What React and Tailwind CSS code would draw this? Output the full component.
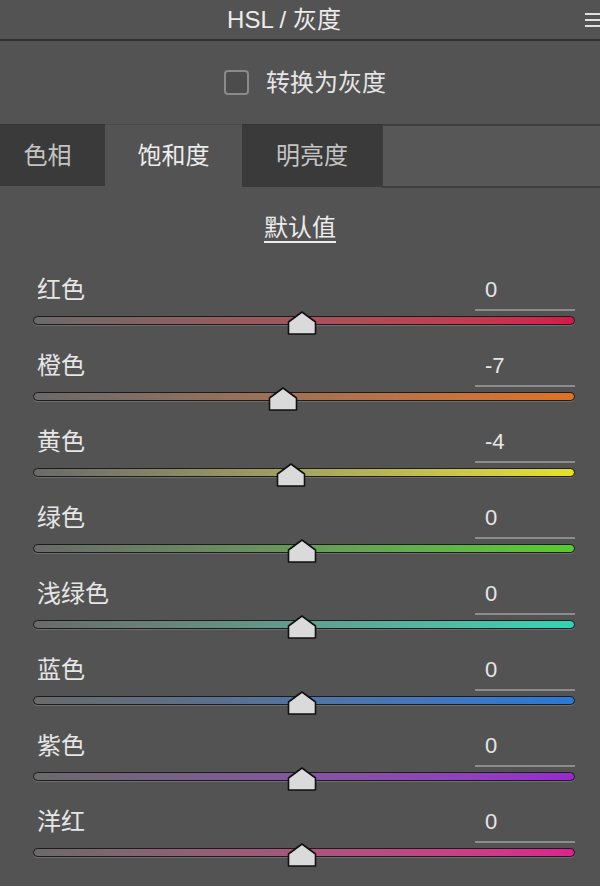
import React from "react"

const FONT = "'Liberation Sans', 'Noto Sans CJK SC', sans-serif"

const rows = [
  { label: "红色", value: 0, track: "bg-linear-to-r from-[#6a6a6a] to-[#d6174a]" },
  { label: "橙色", value: -7, track: "bg-linear-to-r from-[#6a6a6a] to-[#e07220]" },
  { label: "黄色", value: -4, track: "bg-linear-to-r from-[#6a6a6a] to-[#e6e21e]" },
  { label: "绿色", value: 0, track: "bg-linear-to-r from-[#6a6a6a] to-[#56cc2a]" },
  { label: "浅绿色", value: 0, track: "bg-linear-to-r from-[#6a6a6a] to-[#2cd6b4]" },
  { label: "蓝色", value: 0, track: "bg-linear-to-r from-[#6a6a6a] to-[#2a78da]" },
  { label: "紫色", value: 0, track: "bg-linear-to-r from-[#6a6a6a] to-[#9a26d2]" },
  { label: "洋红", value: 0, track: "bg-linear-to-r from-[#6a6a6a] to-[#e01e8e]" },
]

function Thumb() {
  return (
    <svg width="30" height="24" viewBox="0 0 30 24">
      <path d="M15 1 L28.5 11 L28.5 23 L1.5 23 L1.5 11 Z" fill="#dadada" stroke="#111" strokeWidth="1.6" strokeLinejoin="round" />
    </svg>
  )
}

function SliderRow({ label, value, track }) {
  const trackWidth = 542
  const pos = ((value + 100) / 200) * trackWidth
  return (
    <div className="h-[76px] pl-[33px] pr-[25px]">
      <div className="flex justify-between h-[36px]">
        <span className="pl-[4px] text-[24px] leading-[30px] text-[#e6e6e6]">{label}</span>
        <div className="w-[100px] h-[36px] border-b-2 border-[#8c8c8c] pl-[10px] text-[22px] leading-[30px] text-[#e6e6e6]">
          {value}
        </div>
      </div>
      <div className="relative mt-[5px] h-[9px]">
        <div className={`h-[9px] rounded-full border border-[#1c1c1c] shadow-[0_1px_0_#6e6e6e] ${track}`} />
        {/* thumb */}
        <div className="absolute top-[-5px]" style={{ left: pos - 17 }}>
          <Thumb />
        </div>
      </div>
    </div>
  )
}

export default function App() {
  return (
    <div className="w-[600px] h-[886px] overflow-hidden bg-[#535353]" style={{ fontFamily: FONT }}>

      {/* Header */}
      <div className="flex items-center h-[39px]">
        <div className="flex-1 text-center text-[24px] text-[#ececec] leading-[36px]">HSL / 灰度</div>
        <div className="w-[32px] h-[39px] pl-[17px] flex flex-col justify-center gap-[4px]">
          <div className="w-[16px] h-[2px] bg-[#e0e0e0]" />
          <div className="w-[16px] h-[2px] bg-[#e0e0e0]" />
          <div className="w-[16px] h-[2px] bg-[#e0e0e0]" />
        </div>
      </div>
      <div className="h-[2px] bg-[#2e2e2e]" />

      {/* Grayscale checkbox */}
      <div className="flex items-center justify-center gap-[17px] pl-[10px] h-[83px]">
        <div className="w-[25px] h-[25px] rounded-[4px] border-2 border-[#8a8a8a] bg-[#4c4c4c]" />
        <span className="text-[24px] text-[#e6e6e6]">转换为灰度</span>
      </div>

      {/* Tabs */}
      <div className="flex h-[64px]">
        <div className="-ml-[10px] w-[115px] h-[62px] bg-[#3a3a3a] border-t border-[#333] flex items-center justify-center text-[24px] text-[#c4c4c4]">色相</div>
        <div className="w-[137px] h-[64px] bg-[#535353] border-t border-[#4a4a4a] flex items-center justify-center text-[24px] text-[#ededed] pb-[2px]">饱和度</div>
        <div className="w-[140px] h-[63px] bg-[#3a3a3a] border-t border-[#333] flex items-center justify-center text-[24px] text-[#c4c4c4] pb-[1px]">明亮度</div>
        <div className="flex-1 h-[64px] bg-[#575757] border-y-2 border-l border-[#3e3e3e]" />
      </div>

      {/* Default */}
      <div className="flex justify-center pt-[25px] h-[87px]">
        <span className="text-[24px] leading-[30px] text-[#ececec] underline underline-offset-[5px] decoration-[1.5px]">默认值</span>
      </div>

      {rows.map(r => (
        <SliderRow key={r.label} {...r} />
      ))}
    </div>
  )
}
